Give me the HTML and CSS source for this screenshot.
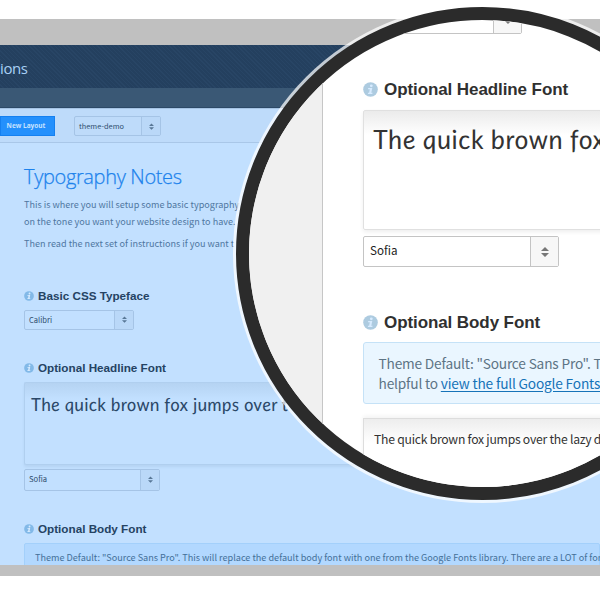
FILE: index.html
```html
<!DOCTYPE html>
<html lang="en">
<head>
<meta charset="utf-8">
<title>Typography Options</title>
<link rel="stylesheet" href="styles.css">
</head>
<body>
<svg class="defs" width="0" height="0" aria-hidden="true">
  <symbol id="info" viewBox="0 0 15 15">
    <circle cx="7.5" cy="7.5" r="7.3" fill="currentColor"/>
    <circle cx="8.3" cy="3.8" r="1.4" class="mark"/>
    <path class="mark" d="M5.2 6h4.1l-1 4.7h1.3l-.3 1.3H4.8l.3-1.3h1l.7-3.4H5z"/>
  </symbol>
  <symbol id="updown" viewBox="0 0 8 10">
    <path fill="currentColor" d="M4 0l4 4H0zM4 10L0 6h8z"/>
  </symbol>
</svg>
<main class="stage">
  <section class="screen">
    <header class="title">ions</header>
    <div class="strip"></div>
    <div class="toolbar">
      <button class="new">New Layout</button>
      <div class="select demo"><span>theme-demo</span><i><svg><use href="#updown"/></svg></i></div>
    </div>
    <div class="page">
      <h1>Typography Notes</h1>
      <p>This is where you will setup some basic typography<br>on the tone you want your website design to have.</p>
      <p class="next">Then read the next set of instructions if you want t</p>
      <h2 class="h-css"><svg><use href="#info"/></svg>Basic CSS Typeface</h2>
      <div class="select calibri"><span>Calibri</span><i><svg><use href="#updown"/></svg></i></div>
      <h2 class="h-head"><svg><use href="#info"/></svg>Optional Headline Font</h2>
      <div class="preview"><span>The quick brown fox jumps over t</span></div>
      <div class="select sofia"><span>Sofia</span><i><svg><use href="#updown"/></svg></i></div>
      <h2 class="h-body"><svg><use href="#info"/></svg>Optional Body Font</h2>
      <div class="notice"><span>Theme Default: "Source Sans Pro". This will replace the default body font with one from the Google Fonts library. There are a LOT of for</span></div>
    </div>
  </section>
  <section class="lens">
    <div class="side"></div>
    <div class="zoomed">
      <div class="select top"><span></span><i><svg><use href="#updown"/></svg></i></div>
      <h2 class="h-head"><svg><use href="#info"/></svg>Optional Headline Font</h2>
      <div class="preview"><span>The quick brown fox</span></div>
      <div class="select sofia"><span>Sofia</span><i><svg><use href="#updown"/></svg></i></div>
      <h2 class="h-body"><svg><use href="#info"/></svg>Optional Body Font</h2>
      <div class="notice">Theme Default: "Source Sans Pro". T<br>helpful to <a>view the full Google Fonts </a></div>
      <div class="sample">The quick brown fox jumps over the lazy d</div>
    </div>
  </section>
</main>
</body>
</html>
```
FILE: styles.css
```css
* { box-sizing: border-box; }
body { margin: 0; background: #fff; width: 600px; height: 600px; overflow: hidden; font-family: "Noto Sans CJK SC", "Noto Sans", sans-serif; }
.defs { position: absolute; }
h1, h2, p { margin: 0; font-weight: 400; }
.stage { position: relative; height: 600px; padding-top: 19px; overflow: hidden; }
.screen { height: 557px; border-top: 26px solid #c0c0c0; border-bottom: 11px solid #c0c0c0; background: #c2e0ff; overflow: hidden; white-space: nowrap; }

.title { height: 43px; color: #a9d0f5; font: 400 15px/47px "Open Sans", sans-serif; letter-spacing: -.4px; background: #24405f repeating-linear-gradient(45deg, #24405f 0 2px, #284565 2px 3px); }
.strip { height: 20px; background: #3a5875; border-bottom: 1px solid #2c4967; }
.toolbar { height: 35px; display: flex; align-items: flex-start; padding-top: 7px; background: #bedbfa; border-top: 1px solid #a5c3e3; border-bottom: 1px solid #a9c7e8; }
.new { width: 55px; height: 20px; margin: 0 19px 0 0; padding: 0 3px 0 0; text-align: center; border: 1px solid #1580f0; background: #2490fc; color: #c6e2ff; font: 700 6.5px/18px "Open Sans", sans-serif; white-space: nowrap; }

.select { display: flex; border: 1px solid #a5c4e6; border-radius: 2px; color: #2f4d6e; }
.select span { flex: 1; padding-left: 4px; }
.select i { width: 19px; border-left: 1px solid #a5c4e6; background: #bad8f8; display: flex; align-items: center; justify-content: center; color: #587796; }
.select svg { width: 5px; height: 7px; }
.demo { width: 87px; height: 20px; font-size: 7.4px; line-height: 18px; }

.page { padding-left: 24px; }
h1 { padding-top: 20px; height: 53px; color: #1c82ec; font: 300 20px/28px "Open Sans", sans-serif; letter-spacing: -.35px; -webkit-text-stroke: .25px #1c82ec; }
p { color: #4f77a1; font-size: 9.08px; line-height: 16.5px; }
.next { margin-top: 6px; }
h2 { display: flex; align-items: center; gap: 4px; height: 14px; font: 700 11.7px/14px "Liberation Sans", sans-serif; color: #254363; }
h2 svg { width: 10px; height: 10px; color: #82b9e8; }
.mark { fill: #d7ebff; }
.h-css { margin-top: 37px; }
.calibri { width: 110px; height: 20px; margin-top: 7px; font-size: 7.6px; line-height: 17px; }
.page .h-head { margin-top: 31px; }
.page .preview { height: 83px; margin-top: 7px; padding: 7px 0 0 6px; border: 1px solid #b0cfef; border-right: 0; border-radius: 2px; box-shadow: 0 2px 3px #b5d3f3; background: linear-gradient(#b5d3f2, #c2e0ff 16px); color: #2b4868; }
.preview { font-family: Lato, cursive; font-style: italic; }
.preview span { display: inline-block; transform: skewX(7deg); }
.page .preview span { font-size: 18px; line-height: 28px; letter-spacing: .38px; }
.page .sofia { width: 136px; height: 22px; margin-top: 4px; font-size: 7.6px; line-height: 18px; }
.page .h-body { margin-top: 31px; }
.page .notice { height: 40px; margin-top: 7px; padding-left: 10px; border: 1px solid #a3d0fb; border-radius: 2px; background: #b2d8ff; color: #447099; font-size: 9.12px; line-height: 26px; }

.lens { position: absolute; left: 236px; top: 7px; width: 493px; height: 493px; display: flex; border: 13px solid #2b2b2b; border-radius: 50%; box-shadow: 0 0 0 3px rgba(255,255,255,.73); background: #fff; overflow: hidden; white-space: nowrap; }
.side { width: 74px; flex: none; background: #f0f0f0; border-right: 1px solid #c6c6c6; }
.zoomed { flex: 1; padding-left: 40px; }
.zoomed .select { border-color: #c4c4c4; color: #222; }
.zoomed .select i { width: 28px; border-color: #c4c4c4; background: #f7f7f7; color: #777; }
.zoomed .select svg { width: 8px; height: 10px; }
.zoomed .top { width: 159px; height: 31px; margin-top: -17px; }
.zoomed h2 { height: 20px; gap: 6px; color: #303030; font-size: 17px; line-height: 20px; padding-top: 1px; letter-spacing: -.09px; }
.zoomed h2 svg { width: 15px; height: 15px; margin-top: -1px; color: #adcbe0; }
.zoomed .mark { fill: #fff; }
.zoomed .h-head { margin-top: 45px; }
.zoomed .preview { height: 120px; margin-top: 11px; padding: 8px 0 0 9px; border: 1px solid #e0e0e0; border-radius: 2px; box-shadow: 0 2px 4px #eee; background: linear-gradient(#ebebeb, #fff 24px); color: #333; font-size: 26.5px; line-height: 41px; letter-spacing: .6px; }
.zoomed .sofia { width: 196px; height: 31px; margin-top: 6px; font-size: 11.6px; line-height: 26px; }
.zoomed .sofia span { padding-left: 6px; }
.zoomed .h-body { margin-top: 45px; }
.zoomed .notice { height: 62px; margin-top: 10px; padding: 9.5px 0 0 14.5px; border: 1px solid #c5e2f7; border-radius: 3px; background: #eaf6ff; color: #5d7485; font-size: 13.7px; line-height: 20px; letter-spacing: -.18px; }
.zoomed a { color: #1673b8; text-decoration: underline; text-underline-offset: 2px; }
.sample { height: 70px; margin-top: 14px; padding: 10px 0 0 10px; border: 1px solid #ddd; background: linear-gradient(#ededed, #fff 24px); box-shadow: 0 -2px 4px #f3f3f3; color: #333; font-size: 12.2px; line-height: 20px; letter-spacing: -.25px; }
```
